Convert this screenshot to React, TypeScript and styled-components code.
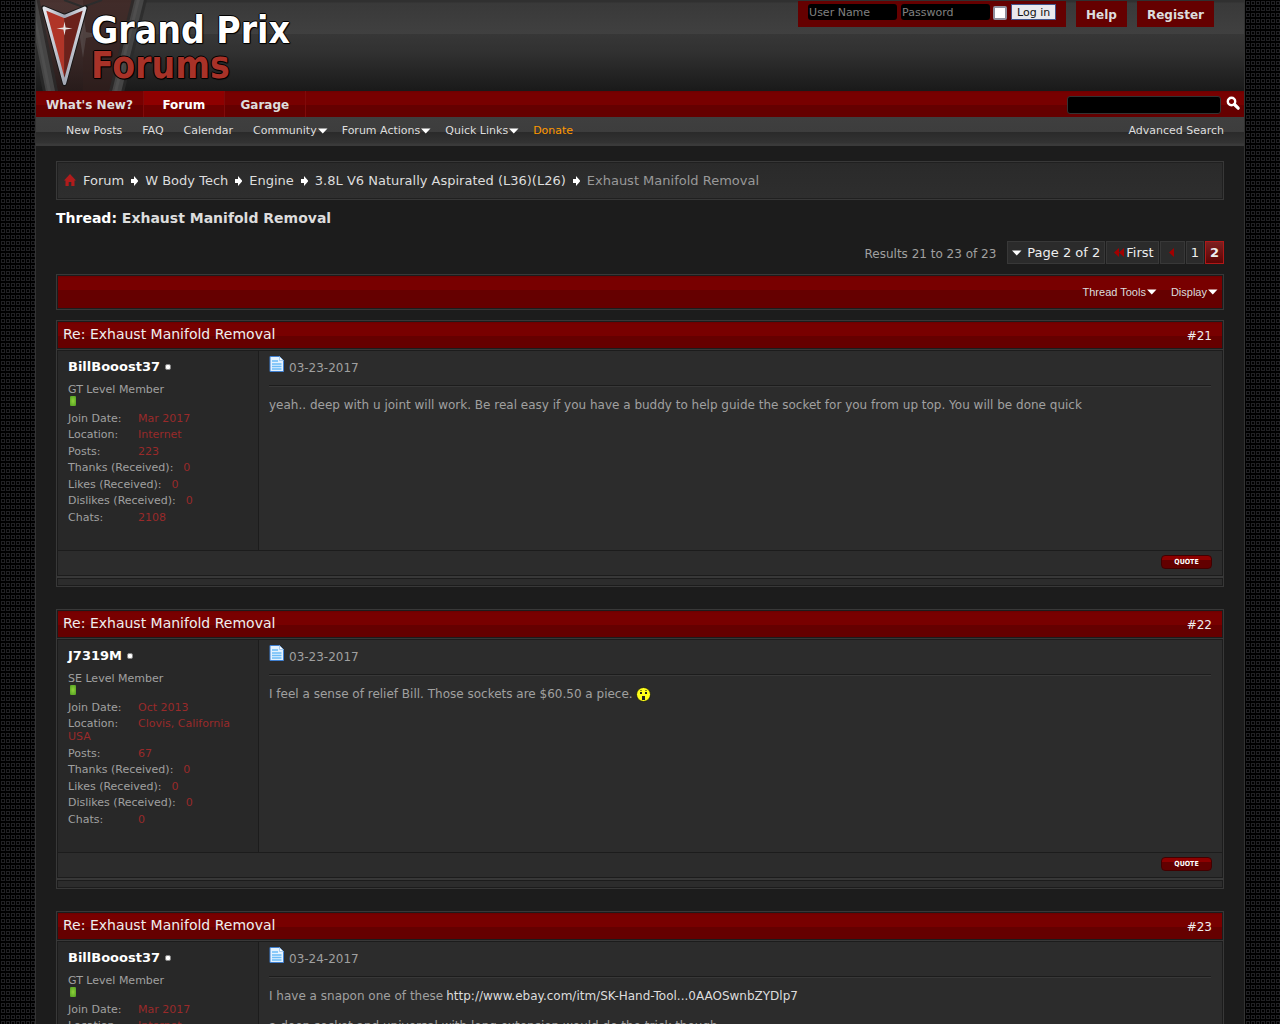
import React from "react";
import styled, { createGlobalStyle } from "styled-components";

const sans = `"DejaVu Sans", Verdana, sans-serif`;
const redBar = `linear-gradient(to bottom, #6c0000 0, #780000 2px, #780000 54%, #650000 54%, #650000 100%)`;

const GlobalStyle = createGlobalStyle`
  *, *::before, *::after { box-sizing: border-box; }
  body {
    margin: 0;
    font-family: ${sans};
    font-size: 12px;
    color: #a0a0a0;
    background-color: #000;
    background-image: url("data:image/svg+xml,%3Csvg xmlns='http://www.w3.org/2000/svg' width='5' height='6'%3E%3Crect x='1.5' y='1.5' width='3' height='3' fill='none' stroke='%23212124'/%3E%3C/svg%3E");
  }
  h1, h2, h3, p, dl, dd, ul, ol { margin: 0; padding: 0; font-weight: normal; }
  ul, ol { list-style: none; }
  a { color: inherit; text-decoration: none; }
  svg { display: block; flex: none; }
`;

const Backdrop = styled.div`
  padding: 0 35px;
`;

const Page = styled.div`
  border: solid #333;
  border-width: 0 1px;
  background: #1c1c1c;
`;

const Header = styled.header`
  display: flex;
  justify-content: space-between;
  align-items: flex-start;
  height: 91px;
  background: linear-gradient(to bottom, #303030 0, #303030 2px, #393939 3px, #404040 34px, #373737 34px, #313131 52px, #1a1a1a 90px);
`;

const Brand = styled.a`
  position: relative;
  display: flex;
  height: 91px;
  padding: 13px 0 0 55px;
`;

const BrandArt = styled.svg`
  position: absolute;
  top: 0;
  left: 0;
`;

const BrandName = styled.h1`
  position: relative;
  font: bold 37px/35px "DejaVu Sans Condensed", "DejaVu Sans", sans-serif;
  color: #fff;
  text-shadow: 1px 0 #000, -1px 0 #000, 0 1px #000, 0 -1px #000, 1px 1px 1px #000;
`;

const BrandSecond = styled.span`
  display: block;
  color: #a83228;
`;

const TopLinks = styled.div`
  display: flex;
  gap: 10px;
  padding: 1px 30px 0 0;
`;

const LoginForm = styled.form`
  display: flex;
  align-items: flex-start;
  height: 26px;
  padding: 3px 10px;
  background: #650000;
`;

const LoginInput = styled.input`
  width: 89px;
  height: 16px;
  margin-right: 4px;
  padding: 0 1px;
  border: 0;
  border-radius: 3px;
  background: #000;
  color: #ddd;
  font: 11px ${sans};
  &::placeholder { color: #808080; opacity: 1; }
`;

const Remember = styled.input`
  appearance: none;
  width: 14px;
  height: 14px;
  margin: 2px 4px 0 -1px;
  border: 2px solid #8f8f9d;
  border-radius: 2px;
  background: #fff;
`;

const LoginButton = styled.button`
  width: 45px;
  height: 16px;
  padding: 0;
  border: 1px solid #43578c;
  background: #e9e9ed;
  color: #111;
  font: 11px/16px ${sans};
`;

const TopLink = styled.a`
  height: 26px;
  padding: 0 10px;
  background: #650000;
  color: #ddd;
  font-weight: bold;
  line-height: 28px;
`;

const NavBar = styled.nav`
  display: flex;
  height: 26px;
  background: ${redBar};
`;

const Tab = styled.a<{ $active?: boolean }>`
  min-width: 81px;
  padding: 0 10px;
  border-right: 1px solid #800a0a;
  background: ${(p) => (p.$active ? "linear-gradient(to bottom, #8f0000 54%, #6e0000 54%)" : "none")};
  color: ${(p) => (p.$active ? "#fff" : "#ddd")};
  font-weight: bold;
  line-height: 28px;
  text-align: center;
`;

const SearchForm = styled.form`
  display: flex;
  align-items: flex-start;
  gap: 5px;
  margin-left: auto;
  padding: 5px 3px 0 0;
`;

const SearchInput = styled.input`
  width: 154px;
  height: 18px;
  border: 1px solid #333;
  border-radius: 3px;
  background: #000;
  color: #ddd;
  font: 11px ${sans};
`;

const SearchButton = styled.button`
  padding: 0;
  border: 0;
  background: none;
`;

const SubNav = styled.nav`
  display: flex;
  justify-content: space-between;
  height: 29px;
  padding: 0 20px 0 30px;
  background: linear-gradient(to bottom, #3f3f3f 0, #3d3d3d 15px, #2a2a2a 15px, #333 26px, #3a3a3a 27px);
  color: #ddd;
  font-size: 11px;
  line-height: 27px;
`;

const SubList = styled.ul`
  display: flex;
`;

const SubItem = styled.li<{ $menu?: boolean }>`
  display: flex;
  align-items: center;
  height: 27px;
  margin-right: ${(p) => (p.$menu ? 14 : 20)}px;
  gap: 1px;
`;

const DonateLink = styled.a`
  color: #f90;
`;

const Content = styled.main`
  padding: 15px 20px 0;
`;

const Breadcrumb = styled.nav`
  border: 1px solid #383838;
`;

const Crumbs = styled.ol`
  display: flex;
  align-items: center;
  gap: 7px;
  height: 37px;
  padding: 0 6px;
  border: 1px solid #202020;
  background: linear-gradient(to bottom, #2a2a2a, #2e2e2e);
  color: #ddd;
  font-size: 13px;
`;

const Crumb = styled.li<{ $current?: boolean }>`
  display: flex;
  align-items: center;
  gap: 7px;
  color: ${(p) => (p.$current ? "#999" : "#ddd")};
`;

const ThreadTitle = styled.h2`
  margin-top: 9px;
  color: #fff;
  font-size: 14px;
  font-weight: bold;
  line-height: 18px;
`;

const ThreadLink = styled.a`
  color: #ddd;
`;

const Pager = styled.div`
  display: flex;
  justify-content: flex-end;
  gap: 1px;
  margin: 14px 0 9px;
  line-height: 21px;
`;

const Results = styled.span`
  margin-right: 10px;
  padding-top: 2px;
  line-height: 22px;
`;

const PageLink = styled.a<{ $active?: boolean }>`
  display: flex;
  align-items: center;
  gap: 5px;
  height: 23px;
  padding: 0 4px;
  border: 1px solid ${(p) => (p.$active ? "#b01818" : "#383838")};
  background: ${(p) => (p.$active ? "linear-gradient(to bottom, #7c2020, #5e0404)" : "#2b2b2b")};
  color: #eee;
  font-size: 13px;
  font-weight: ${(p) => (p.$active ? "bold" : "normal")};
`;

const FirstLink = styled(PageLink)`
  gap: 2px;
  padding: 0 4px 0 7px;
`;

const PrevLink = styled(PageLink)`
  padding: 0 10px 0 8px;
`;

const ToolFrame = styled.div`
  border: 1px solid #383838;
`;

const Tools = styled.div`
  display: flex;
  justify-content: flex-end;
  align-items: center;
  gap: 14px;
  height: 34px;
  padding: 0 4px;
  border: 1px solid #1c1c1c;
  background: linear-gradient(to bottom, #6c0000 0, #780000 2px, #780000 14px, #650000 14px);
  color: #ddd;
  font: 11px "Liberation Sans", Helvetica, sans-serif;
`;

const ToolLink = styled.a`
  display: flex;
  align-items: center;
  gap: 1px;
`;

const Post = styled.article`
  margin: 10px 0 22px;
  border: 1px solid #383838;
  & + & { margin-top: 0; }
`;

const PostHead = styled.header`
  display: flex;
  justify-content: space-between;
  height: 28px;
  padding: 0 10px 0 5px;
  border: 1px solid #1c1c1c;
  background: ${redBar};
  color: #eee;
`;

const PostTitle = styled.h3`
  font-size: 14px;
  line-height: 24px;
`;

const PostNumber = styled.a`
  line-height: 28px;
`;

const PostMain = styled.div`
  border: 1px solid #1c1c1c;
  background: #2c2c2c;
  outline: 1px solid #383838;
  margin-top: 1px;
`;

const PostColumns = styled.div`
  display: flex;
  border-bottom: 1px solid #1c1c1c;
`;

const UserInfo = styled.aside`
  flex: none;
  width: 201px;
  padding: 8px 10px 22px;
  border-right: 1px solid #1c1c1c;
  background: #282828;
  font-size: 11px;
`;

const UserName = styled.a`
  display: flex;
  align-items: center;
  gap: 5px;
  color: #fff;
  font-size: 13px;
  font-weight: bold;
  line-height: 16px;
`;

const OnlineDot = styled.span`
  width: 6px;
  height: 6px;
  border: 1px solid #888;
  border-radius: 2px;
  background: #fff;
`;

const Rank = styled.p`
  margin-top: 8px;
  line-height: 14px;
`;

const Reputation = styled.div`
  width: 6px;
  height: 10px;
  margin: -1px 2px 6px;
  border-radius: 1px;
  background: radial-gradient(#8fd23a, #4f9a20);
`;

const Stats = styled.dl`
  line-height: 13px;
`;

const Stat = styled.div`
  margin-bottom: 3px;
  &:nth-child(even) { margin-bottom: 4px; }
  &:last-child { margin-bottom: 4px; }
`;

const StatName = styled.dt`
  float: left;
  min-width: 60px;
  margin-right: 10px;
`;

const StatValue = styled.dd`
  color: #992a2a;
`;

const PostContent = styled.div`
  flex: 1;
  min-width: 0;
  padding: 5px 11px 10px 10px;
`;

const PostDate = styled.div`
  display: flex;
  gap: 4px;
  height: 30px;
  border-bottom: 1px solid #1c1c1c;
  box-shadow: 0 1px #383838;
  line-height: 24px;
`;

const PostText = styled.div`
  display: flex;
  flex-direction: column;
  gap: 14px;
  margin-top: 11px;
  line-height: 16px;
`;

const Line = styled.p`
  display: flex;
  align-items: center;
  gap: 3px;
`;

const BodyLink = styled.a`
  color: #ddd;
`;

const PostFoot = styled.footer`
  display: flex;
  justify-content: flex-end;
  height: 24px;
  padding: 4px 10px;
`;

const QuoteButton = styled.button`
  width: 51px;
  height: 14px;
  padding: 0;
  border: 1px solid #420000;
  border-radius: 4px;
  background: linear-gradient(to bottom, #8c0000 35%, #620000 35%);
  color: #fff;
  font: bold 7px/11px "DejaVu Sans Condensed", ${sans};
`;

const PostStrip = styled.div`
  height: 8px;
  margin-top: 2px;
  border: 1px solid #1c1c1c;
  background: #2c2c2c;
  outline: 1px solid #383838;
`;

const Caret = () => (
  <svg width="10" height="6" viewBox="0 0 10 6"><path d="M0 .5h9.500L4.750 5.500z" fill="#fff" /></svg>
);

const Arrow = () => (
  <svg width="7" height="10" viewBox="0 0 7 10"><path d="M0 3h3V0l4.500 5-4.500 5V7H0z" fill="#fff" /></svg>
);

const LeftArrow = () => (
  <svg width="5" height="9" viewBox="0 0 5 9"><path d="M5 0v9L0 4.500z" fill="#a00000" /></svg>
);

const DoubleArrow = () => (
  <svg width="10" height="9" viewBox="0 0 10 9"><path d="M5 0v9L0 4.500zM10 0v9L5 4.500z" fill="#a00000" /></svg>
);

const HomeIcon = () => (
  <svg width="12" height="14" viewBox="0 0 12 14"><path d="M6 0l6 6.500h-1.500V12H7.300V8H4.700v4H1.500V6.500H0z" fill="#b01c1c" /></svg>
);

const SearchIcon = () => (
  <svg width="15" height="15" viewBox="0 0 15 15" fill="none" stroke="#fff">
    <circle cx="5.500" cy="5.500" r="3.700" strokeWidth="2.400" />
    <path d="M8.500 8.500l3.700 3.700" strokeWidth="3.200" strokeLinecap="round" />
  </svg>
);

const DocIcon = () => (
  <svg width="16" height="16" viewBox="0 0 16 16">
    <path d="M1 .5h9.500l4 4v11H1z" fill="#e3f2ff" stroke="#3f7fd0" />
    <path d="M10.500 .5l4 4h-4z" fill="#fff" stroke="#78aee6" strokeWidth=".6" />
    <path d="M3 5h6M3 8h9.500M3 10.500h9.500M3 13h9.500" stroke="#6cbcf7" strokeWidth="1.600" />
  </svg>
);

const Smiley = () => (
  <svg width="15" height="15" viewBox="0 0 15 15">
    <circle cx="7.500" cy="7.500" r="7" fill="#ffff1a" stroke="#111" strokeWidth=".8" />
    <path d="M4 5h2v2H4zM9 5h2v2H9zM6 9h3v4H6z" fill="#222" />
    <path d="M4 3.500h2M9 3.500h2" stroke="#8a8a10" />
  </svg>
);

const BrandEmblem = () => (
  <BrandArt width="112" height="91" viewBox="0 0 112 91" aria-hidden="true">
    <defs>
      <linearGradient id="chrome" x1="0" x2="1">
        <stop offset="0" stopColor="#e6e8ee" />
        <stop offset=".5" stopColor="#a3a7b4" />
        <stop offset="1" stopColor="#dfe2ea" />
      </linearGradient>
      <linearGradient id="fade" x1="0" y1="0" x2="0" y2="1">
        <stop offset="0" stopColor="#52322f" />
        <stop offset="1" stopColor="#2e1c1b" />
      </linearGradient>
    </defs>
    <path d="M0 0h104L80 91H16L0 10z" fill="url(#fade)" opacity=".7" />
    <path d="M47 0H98L74 91H47z" fill="#35211f" opacity=".4" />
    <path d="M-4 0L15 94M104 -3L80 94" fill="none" stroke="#2a2a2a" strokeWidth="15" opacity=".8" />
    <path d="M-4 0L15 94M104 -3L80 94" fill="none" stroke="#4c4c4c" strokeWidth="9" opacity=".8" />
    <path d="M-5 0L14 94M103 -3L79 94" fill="none" stroke="#5c5c5c" strokeWidth="3" opacity=".4" />
    <path d="M28 0L47 7 66 0" fill="none" stroke="#2c2c2c" strokeWidth="2" />
    <path d="M47 11L50 32 66 35 50 38 47 58 44 38 28 35 44 32z" fill="#67605f" opacity=".45" />
    <path d="M7.500 7.500L28.500 16 49.500 7.500 28.500 84z" fill="none" stroke="#151515" strokeWidth="4.500" strokeLinejoin="round" />
    <path d="M9 9L28.500 17V80z" fill="#b03528" />
    <path d="M48 9L28.500 17V80z" fill="#6b211b" />
    <path d="M8 8L28.500 16.500 49 8 28.500 83.500z" fill="none" stroke="url(#chrome)" strokeWidth="3" strokeLinejoin="round" />
    <path d="M28.500 21.500L29.600 27.400 36.500 28.500 29.600 29.600 28.500 35.500 27.400 29.600 20.500 28.500 27.400 27.400z" fill="#e8e4e4" />
  </BrandArt>
);

type PostData = {
  id: number;
  user: string;
  rank: string;
  date: string;
  stats: [string, string][];
  body: React.ReactNode;
};

const billStats: [string, string][] = [
  ["Join Date:", "Mar 2017"],
  ["Location:", "Internet"],
  ["Posts:", "223"],
  ["Thanks (Received):", "0"],
  ["Likes (Received):", "0"],
  ["Dislikes (Received):", "0"],
  ["Chats:", "2108"],
];

const posts: PostData[] = [
  {
    id: 21,
    user: "BillBooost37",
    rank: "GT Level Member",
    date: "03-23-2017",
    stats: billStats,
    body: (
      <Line>
        yeah.. deep with u joint will work. Be real easy if you have a buddy to help guide the socket for you from up top. You will be done quick
      </Line>
    ),
  },
  {
    id: 22,
    user: "J7319M",
    rank: "SE Level Member",
    date: "03-23-2017",
    stats: [
      ["Join Date:", "Oct 2013"],
      ["Location:", "Clovis, California USA"],
      ["Posts:", "67"],
      ["Thanks (Received):", "0"],
      ["Likes (Received):", "0"],
      ["Dislikes (Received):", "0"],
      ["Chats:", "0"],
    ],
    body: (
      <Line>
        I feel a sense of relief Bill. Those sockets are $60.50 a piece. <Smiley />
      </Line>
    ),
  },
  {
    id: 23,
    user: "BillBooost37",
    rank: "GT Level Member",
    date: "03-24-2017",
    stats: billStats,
    body: (
      <>
        <Line>
          I have a snapon one of these <BodyLink href="#">http://www.ebay.com/itm/SK-Hand-Tool...0AAOSwnbZYDlp7</BodyLink>
        </Line>
        <Line>a deep socket and universal with long extension would do the trick though</Line>
      </>
    ),
  },
];

const subLinks = [
  { label: "New Posts" },
  { label: "FAQ" },
  { label: "Calendar" },
  { label: "Community", menu: true },
  { label: "Forum Actions", menu: true },
  { label: "Quick Links", menu: true },
];

const crumbs = ["Forum", "W Body Tech", "Engine", "3.8L V6 Naturally Aspirated (L36)(L26)"];

export default function App() {
  return (
    <Backdrop>
      <GlobalStyle />
      <Page>
        <Header>
          <Brand href="#">
            <BrandEmblem />
            <BrandName>
              Grand Prix
              <BrandSecond>Forums</BrandSecond>
            </BrandName>
          </Brand>
          <TopLinks>
            <LoginForm>
              <LoginInput aria-label="User Name" placeholder="User Name" />
              <LoginInput aria-label="Password" type="password" placeholder="Password" />
              <Remember type="checkbox" aria-label="Remember Me?" />
              <LoginButton type="button">Log in</LoginButton>
            </LoginForm>
            <TopLink href="#">Help</TopLink>
            <TopLink href="#">Register</TopLink>
          </TopLinks>
        </Header>
        <NavBar>
          <Tab href="#">What's New?</Tab>
          <Tab href="#" $active>Forum</Tab>
          <Tab href="#">Garage</Tab>
          <SearchForm>
            <SearchInput aria-label="Search" />
            <SearchButton type="button" aria-label="Search"><SearchIcon /></SearchButton>
          </SearchForm>
        </NavBar>
        <SubNav>
          <SubList>
            {subLinks.map((l) => (
              <SubItem key={l.label} $menu={l.menu}>
                <a href="#">{l.label}</a>
                {l.menu && <Caret />}
              </SubItem>
            ))}
            <SubItem><DonateLink href="#">Donate</DonateLink></SubItem>
          </SubList>
          <a href="#">Advanced Search</a>
        </SubNav>
        <Content>
          <Breadcrumb>
            <Crumbs>
              <Crumb><HomeIcon /></Crumb>
              {crumbs.map((c) => (
                <Crumb key={c}><a href="#">{c}</a><Arrow /></Crumb>
              ))}
              <Crumb $current>Exhaust Manifold Removal</Crumb>
            </Crumbs>
          </Breadcrumb>
          <ThreadTitle>Thread: <ThreadLink href="#">Exhaust Manifold Removal</ThreadLink></ThreadTitle>
          <Pager>
            <Results>Results 21 to 23 of 23</Results>
            <PageLink href="#"><Caret />Page 2 of 2</PageLink>
            <FirstLink href="#"><DoubleArrow />First</FirstLink>
            <PrevLink href="#" aria-label="Previous page"><LeftArrow /></PrevLink>
            <PageLink href="#">1</PageLink>
            <PageLink href="#" $active>2</PageLink>
          </Pager>
          <ToolFrame>
            <Tools>
              <ToolLink href="#">Thread Tools<Caret /></ToolLink>
              <ToolLink href="#">Display<Caret /></ToolLink>
            </Tools>
          </ToolFrame>
          {posts.map((p) => (
            <Post key={p.id}>
              <PostHead>
                <PostTitle>Re: Exhaust Manifold Removal</PostTitle>
                <PostNumber href="#">#{p.id}</PostNumber>
              </PostHead>
              <PostMain>
                <PostColumns>
                  <UserInfo>
                    <UserName href="#">{p.user}<OnlineDot /></UserName>
                    <Rank>{p.rank}</Rank>
                    <Reputation />
                    <Stats>
                      {p.stats.map(([name, value]) => (
                        <Stat key={name}>
                          <StatName>{name}</StatName>
                          <StatValue>{value}</StatValue>
                        </Stat>
                      ))}
                    </Stats>
                  </UserInfo>
                  <PostContent>
                    <PostDate><DocIcon />{p.date}</PostDate>
                    <PostText>{p.body}</PostText>
                  </PostContent>
                </PostColumns>
                <PostFoot><QuoteButton type="button">QUOTE</QuoteButton></PostFoot>
              </PostMain>
              <PostStrip />
            </Post>
          ))}
        </Content>
      </Page>
    </Backdrop>
  );
}
